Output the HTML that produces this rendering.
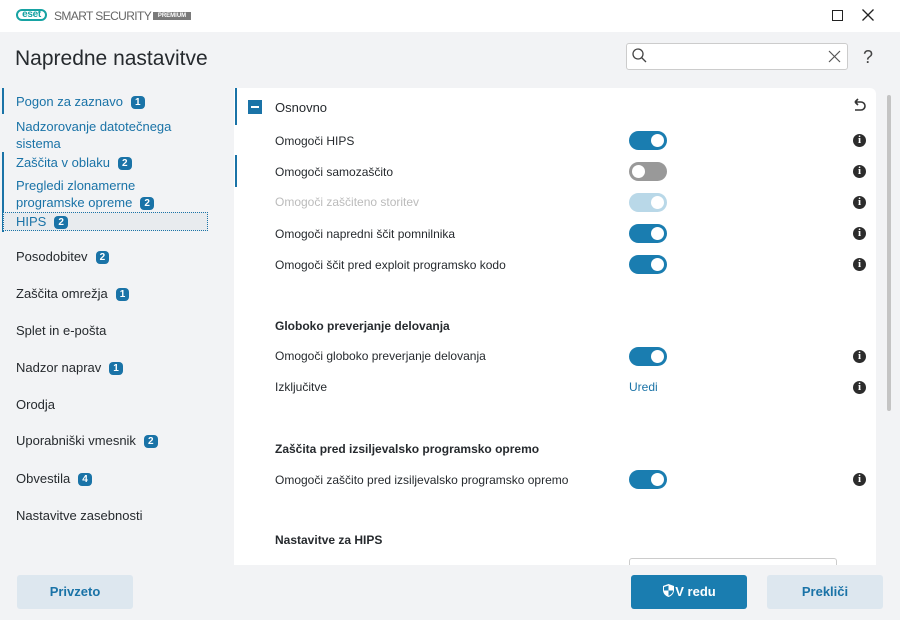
<!DOCTYPE html>
<html><head><style>
*{margin:0;padding:0;box-sizing:border-box}
body{width:900px;height:620px;background:#f2f3f5;font-family:"Liberation Sans",sans-serif;position:relative;overflow:hidden;color:#262a2e}
.top{position:absolute;left:0;top:0;width:900px;height:32px;background:#fff}
.a{position:absolute}
.nav{position:absolute;left:16px;font-size:13px;color:#1a73a7}
.nav2{color:#262a2e}
.b{display:inline-block;background:#1a73a7;color:#fff;font-size:10px;font-weight:bold;border-radius:4px;padding:0 4px;height:13px;line-height:13px;margin-left:8px;vertical-align:1px}
.bar{position:absolute;left:2px;width:2px;background:#1a73a7}
.panel{position:absolute;left:234px;top:88px;width:642px;height:477px;background:#fff;border-radius:0 6px 0 0}
.lbl{position:absolute;left:275px;font-size:12px}
.h{font-weight:bold}
.tg{position:absolute;left:629px;width:38px;height:19px;border-radius:10px;background:#1a7db0}
.tg::after{content:"";position:absolute;top:3px;right:3px;width:13px;height:13px;border-radius:50%;background:#fff}
.tg.off{background:#999}.tg.off::after{right:auto;left:3px}
.tg.dis{background:#b9d8e8}
.i{position:absolute;left:853px;width:13px;height:13px;border-radius:50%;background:#2c2c2c;color:#fff;font:bold 11px/13px "Liberation Serif",serif;text-align:center}
.btn{position:absolute;top:575px;height:34px;border-radius:3px;font-size:13px;font-weight:bold;text-align:center;line-height:34px}
</style></head><body>
<div class="top"></div>
<div class="a" style="left:16px;top:9px;width:31px;height:12px;border:2px solid #17a3a3;border-radius:6px;font:bold 10px/8px 'Liberation Sans';color:#17a3a3;text-align:center;letter-spacing:-0.3px">eset</div>
<div class="a" style="left:54px;top:9px;font-size:12px;color:#666;letter-spacing:-0.6px">SMART SECURITY</div>
<div class="a" style="left:153px;top:12px;width:38px;height:8px;background:#7a7a7a;color:#fff;font-size:6px;line-height:8px;text-align:center;font-weight:bold">PREMIUM</div>
<div class="a" style="left:832px;top:10px;width:11px;height:11px;border:1.3px solid #222"></div>
<svg class="a" style="left:862px;top:9px" width="12" height="12"><path d="M0.5 0.5L11.5 11.5M11.5 0.5L0.5 11.5" stroke="#222" stroke-width="1.3"/></svg>
<div class="a" style="left:15px;top:47px;font-size:21px;color:#262a2e">Napredne nastavitve</div>
<div class="a" style="left:626px;top:43px;width:222px;height:27px;background:#fff;border:1px solid #ccc;border-radius:3px"></div>
<svg class="a" style="left:631px;top:47px" width="18" height="18"><circle cx="7" cy="7" r="5" fill="none" stroke="#444" stroke-width="1.3"/><line x1="10.5" y1="10.5" x2="15" y2="15" stroke="#444" stroke-width="1.3"/></svg>
<svg class="a" style="left:828px;top:50px" width="13" height="13"><path d="M1 1L12 12M12 1L1 12" stroke="#555" stroke-width="1.2"/></svg>
<div class="a" style="left:863px;top:47px;font-size:18px;color:#444">?</div>

<div class="bar" style="top:88px;height:26px"></div>
<div class="bar" style="top:152px;height:80px"></div>
<div class="nav" style="top:94px">Pogon za zaznavo<span class="b">1</span></div>
<div class="nav" style="top:118px;line-height:17px">Nadzorovanje datotečnega<br>sistema</div>
<div class="nav" style="top:155px">Zaščita v oblaku<span class="b">2</span></div>
<div class="nav" style="top:177px;line-height:17px">Pregledi zlonamerne<br>programske opreme<span class="b">2</span></div>
<div class="a" style="left:3px;top:212px;width:205px;height:19px;border:1px dotted #1a73a7;background:#e8ebee"></div>
<div class="nav" style="top:214px">HIPS<span class="b">2</span></div>
<div class="nav nav2" style="top:249px">Posodobitev<span class="b">2</span></div>
<div class="nav nav2" style="top:286px">Zaščita omrežja<span class="b">1</span></div>
<div class="nav nav2" style="top:323px">Splet in e-pošta</div>
<div class="nav nav2" style="top:360px">Nadzor naprav<span class="b">1</span></div>
<div class="nav nav2" style="top:397px">Orodja</div>
<div class="nav nav2" style="top:433px">Uporabniški vmesnik<span class="b">2</span></div>
<div class="nav nav2" style="top:471px">Obvestila<span class="b">4</span></div>
<div class="nav nav2" style="top:508px">Nastavitve zasebnosti</div>

<div class="panel"></div>
<div class="a" style="left:235px;top:88px;width:2px;height:37px;background:#1a73a7"></div>
<div class="a" style="left:235px;top:155px;width:2px;height:32px;background:#1a73a7"></div>
<div class="a" style="left:248px;top:100px;width:14px;height:14px;background:#1a73a7"><div style="position:absolute;left:3px;top:6px;width:8px;height:2px;background:#fff"></div></div>
<div class="lbl" style="top:100px;font-size:13px">Osnovno</div>
<svg class="a" style="left:851px;top:98px" width="16" height="16"><path d="M4 4H10A4 4 0 0 1 10 12H4M4 4L7 1M4 4L7 7" fill="none" stroke="#333" stroke-width="1.6"/></svg>
<div class="a" style="left:887px;top:95px;width:4px;height:316px;background:#c4c4c4;border-radius:2px"></div>

<div class="lbl" style="top:134px">Omogoči HIPS</div><div class="tg" style="top:131px"></div><div class="i" style="top:134px">i</div>
<div class="lbl" style="top:165px">Omogoči samozaščito</div><div class="tg off" style="top:162px"></div><div class="i" style="top:165px">i</div>
<div class="lbl" style="top:195px;color:#bbb">Omogoči zaščiteno storitev</div><div class="tg dis" style="top:193px"></div><div class="i" style="top:196px">i</div>
<div class="lbl" style="top:227px">Omogoči napredni ščit pomnilnika</div><div class="tg" style="top:224px"></div><div class="i" style="top:227px">i</div>
<div class="lbl" style="top:258px">Omogoči ščit pred exploit programsko kodo</div><div class="tg" style="top:255px"></div><div class="i" style="top:258px">i</div>
<div class="lbl h" style="top:319px">Globoko preverjanje delovanja</div>
<div class="lbl" style="top:349px">Omogoči globoko preverjanje delovanja</div><div class="tg" style="top:347px"></div><div class="i" style="top:350px">i</div>
<div class="lbl" style="top:380px">Izključitve</div><div class="a" style="left:629px;top:380px;font-size:12px;color:#1a73a7">Uredi</div><div class="i" style="top:381px">i</div>
<div class="lbl h" style="top:442px">Zaščita pred izsiljevalsko programsko opremo</div>
<div class="lbl" style="top:473px">Omogoči zaščito pred izsiljevalsko programsko opremo</div><div class="tg" style="top:470px"></div><div class="i" style="top:473px">i</div>
<div class="lbl h" style="top:533px">Nastavitve za HIPS</div>
<div class="a" style="left:629px;top:558px;width:208px;height:10px;border:1px solid #ccc;border-bottom:none;border-radius:3px 3px 0 0"></div>
<div class="a" style="left:0;top:565px;width:900px;height:55px;background:#f2f3f5"></div>
<div class="btn" style="left:17px;width:116px;background:#dde7ef;color:#1a73a7">Privzeto</div>
<div class="btn" style="left:631px;width:116px;background:#1a7db0;color:#fff"><svg width="13" height="15" style="vertical-align:-2px" viewBox="0 0 13 15"><path d="M6.5 1L12 3V7C12 10.5 9.5 13 6.5 14C3.5 13 1 10.5 1 7V3Z" fill="#fff"/><path d="M6.5 2.5V7.5H11C11 10 9 12 6.5 12.8V7.5H2V4Z" fill="#1a7db0"/></svg>V redu</div>
<div class="btn" style="left:767px;width:116px;background:#dde7ef;color:#1a73a7">Prekliči</div>
</body></html>
